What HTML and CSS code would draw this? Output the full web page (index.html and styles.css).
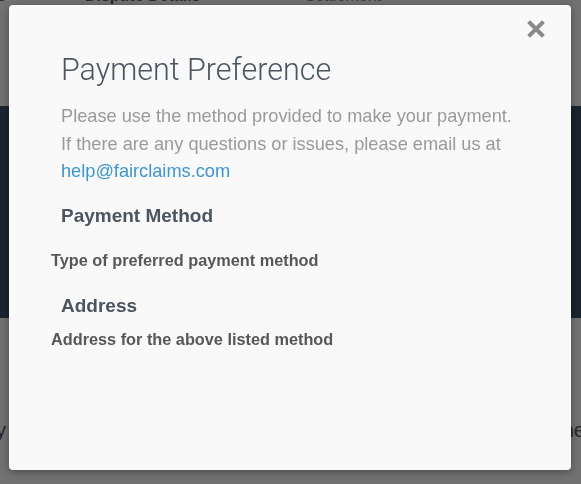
FILE: index.html
```html
<!DOCTYPE html>
<html>
<head>
<meta charset="utf-8">
<link rel="stylesheet" href="styles.css">
</head>
<body>
<div class="page">
  <div class="nav">
    <span class="nav-edge">s</span>
    <span class="nav-item">Dispute Details</span>
    <span class="nav-item light">Settlement</span>
  </div>
  <div class="band"></div>
  <div class="lower">
    <span class="frag">y</span>
    <span class="frag">he</span>
  </div>
</div>
<div class="modal">
  <svg class="close" width="18" height="18" viewBox="0 0 18 18" aria-label="Close">
    <path d="M3 3 L15 15 M15 3 L3 15" stroke="#8a8a8a" stroke-width="4" stroke-linecap="square" fill="none"/>
  </svg>
  <div class="body">
    <h1 class="title">Payment Preference</h1>
    <p class="intro">Please use the method provided to make your payment.<br>If there are any questions or issues, please email us at<br><a class="link" href="#">help@fairclaims.com</a></p>
    <h2 class="section first">Payment Method</h2>
    <div class="label first">Type of preferred payment method</div>
    <h2 class="section second">Address</h2>
    <div class="label second">Address for the above listed method</div>
  </div>
</div>
</body>
</html>
```
FILE: styles.css
```css
html, body { margin: 0; padding: 0; }
body {
  width: 581px; height: 484px; overflow: hidden;
  background: #727272;
  font-family: "Liberation Sans", Arial, sans-serif;
}
.page { display: flex; flex-direction: column; height: 484px; }
.nav {
  height: 120px; display: flex; align-items: flex-start;
  margin-top: -14px; box-sizing: border-box;
}
.nav-item { font-size: 16px; font-weight: bold; color: #2a2a2a; line-height: 20px; }
.nav-item:nth-child(2) { margin-left: 79px; }
.nav-item.light { font-weight: normal; margin-left: 104px; color: #3a3a3a; }
.nav-edge { font-size: 16px; font-weight: bold; color: #2a2a2a; line-height: 20px; margin-left: -3px; }
.band { height: 212px; background: #1b2530; }
.lower {
  flex: 1; display: flex; justify-content: space-between; align-items: flex-start;
  padding-top: 101px; margin: 0 -4px;
}
.frag { font-size: 20px; color: #262626; }
.modal {
  position: fixed; left: 9px; top: 5px; width: 562px; height: 465px;
  background: #f9f9f9; border-radius: 4px;
  box-shadow: 0 2px 8px rgba(0,0,0,0.35);
  box-sizing: border-box;
}
.close { position: absolute; left: 518px; top: 15px; }
.body { padding: 47px 42px 0 42px; }
.title {
  margin: 0 0 0 10px; font-family: Roboto, sans-serif; font-weight: 300;
  font-size: 30.5px; line-height: 36px; color: #4b5560;
}
.intro {
  margin: 15px 0 0 10px; font-size: 18.2px; line-height: 27.5px; color: #9a9a9a;
}
.link { color: #3b96d6; text-decoration: none; }
.section {
  margin: 0 0 0 10px; font-size: 19px; font-weight: bold; color: #4b5560; line-height: 22px;
}
.section.first { margin-top: 19.5px; }
.section.second { margin-top: 25px; }
.label { font-size: 16.3px; font-weight: bold; color: #575757; line-height: 20px; }
.label.first { margin-top: 22.5px; }
.label.second { margin-top: 12px; }
```
